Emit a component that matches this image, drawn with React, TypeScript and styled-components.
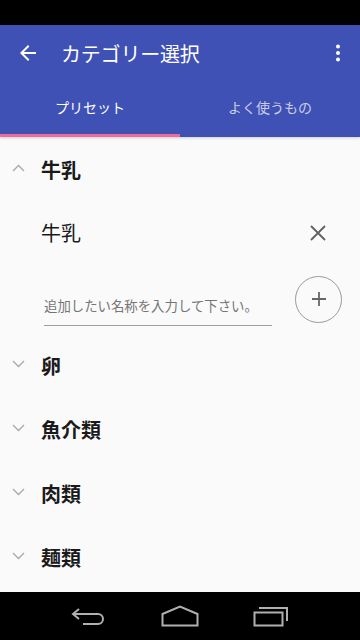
import React from "react";
import styled, { createGlobalStyle } from "styled-components";

const Global = createGlobalStyle`
  html, body { margin: 0; padding: 0; }
  body {
    width: 360px; height: 640px; overflow: hidden;
    font-family: Roboto, "Noto Sans CJK JP", sans-serif;
    background: #000;
  }
  * { box-sizing: border-box; }
`;

const Screen = styled.div`
  width: 360px; height: 640px;
  display: flex; flex-direction: column;
  background: #fafafa;
`;

const StatusBar = styled.div`
  height: 25px; background: #000; flex: none;
`;

const Header = styled.div`
  background: #3f51b5;
  flex: none;
  position: relative;
  z-index: 1;
  box-shadow: 0 1px 3px rgba(0,0,0,0.18);
`;

const AppBar = styled.div`
  height: 56px;
  display: flex; align-items: center;
  padding: 0 10px 0 16px;
`;

const IconBox = styled.div`
  width: 24px; height: 24px;
  display: flex; align-items: center; justify-content: center;
  flex: none;
`;

const Title = styled.div`
  flex: 1;
  margin-left: 21px;
  color: #fff;
  font-size: 20px;
  font-family: "Noto Sans CJK JP", sans-serif;
  letter-spacing: -0.2px;
`;

const Tabs = styled.div`
  height: 56px;
  display: flex;
  position: relative;
`;

const Tab = styled.div<{ $active?: boolean }>`
  flex: 1;
  display: flex; align-items: center; justify-content: center;
  padding-bottom: 5px;
  font-family: "Noto Sans CJK JP", sans-serif;
  font-size: 14px;
  font-weight: 400;
  color: ${(p) => (p.$active ? "#fff" : "rgba(255,255,255,0.72)")};
  position: relative;
`;

const Indicator = styled.div`
  position: absolute; left: 0; bottom: 0;
  width: 50%; height: 3px;
  background: #ec6a9c;
`;

const Content = styled.div`
  flex: 1;
  display: flex; flex-direction: column;
  overflow: hidden;
`;

const GroupRow = styled.div`
  height: 64px; flex: none;
  display: flex; align-items: center;
  padding-left: 12px;
`;

const Chevron = styled.div`
  width: 13px; height: 12px;
  display: flex; align-items: center; justify-content: center;
  margin-top: -3px;
`;

const GroupLabel = styled.div`
  margin-left: 16px;
  font-family: "Noto Sans CJK JP", sans-serif;
  font-size: 20px;
  font-weight: 700;
  color: #1a1a1a;
`;

const ItemRow = styled.div`
  height: 64px; flex: none;
  display: flex; align-items: center;
  padding: 0 30px 0 41px;
`;

const ItemLabel = styled.div`
  flex: 1;
  margin-top: -2px;
  font-family: "Noto Sans CJK JP", sans-serif;
  font-size: 20px;
  color: #1a1a1a;
`;

const InputRow = styled.div`
  height: 68px; flex: none;
  display: flex; align-items: center;
  padding: 0 18px 0 44px;
`;

const InputWrap = styled.div`
  width: 228px;
  height: 40px;
  margin-top: 14px;
  border-bottom: 1.5px solid #9e9e9e;
  display: flex; align-items: center;
`;

const Input = styled.input`
  width: 100%;
  border: none; outline: none; background: transparent;
  padding: 0 0 2px;
  font-family: "Noto Sans CJK JP", sans-serif;
  font-size: 13.4px;
  color: #333;
  &::placeholder { color: #757575; }
`;

const AddButton = styled.button`
  margin-left: auto;
  width: 47px; height: 47px;
  border-radius: 50%;
  border: 1.5px solid #9a9a9a;
  background: transparent;
  display: flex; align-items: center; justify-content: center;
  padding: 0;
`;

const NavBar = styled.div`
  height: 48px; flex: none;
  background: #000;
  display: flex; align-items: center; justify-content: space-around;
  padding: 0 44px;
`;

const NavIcon = styled.div`
  width: 40px; height: 24px;
  display: flex; align-items: center; justify-content: center;
`;

const ChevronIcon = ({ up }: { up?: boolean }) => (
  <svg width="13" height="8" viewBox="0 0 13 8">
    <path
      d={up ? "M1 7 L6.5 1.5 L12 7" : "M1 1 L6.5 6.5 L12 1"}
      fill="none"
      stroke="#a8a8a8"
      strokeWidth="1.3"
    />
  </svg>
);

const groups = ["卵", "魚介類", "肉類", "麺類"];

export default function App() {
  return (
    <>
      <Global />
      <Screen>
        <StatusBar />
        <Header>
          <AppBar>
            <IconBox>
              <svg width="24" height="24" viewBox="0 0 24 24">
                <path d="M20 11H7.83l5.59-5.59L12 4l-8 8 8 8 1.41-1.41L7.83 13H20v-2z" fill="#fff" />
              </svg>
            </IconBox>
            <Title>カテゴリー選択</Title>
            <IconBox>
              <svg width="24" height="24" viewBox="0 0 24 24">
                <circle cx="12" cy="5.5" r="2" fill="#fff" />
                <circle cx="12" cy="12" r="2" fill="#fff" />
                <circle cx="12" cy="18.5" r="2" fill="#fff" />
              </svg>
            </IconBox>
          </AppBar>
          <Tabs>
            <Tab $active>プリセット</Tab>
            <Tab>よく使うもの</Tab>
            <Indicator />
          </Tabs>
        </Header>
        <Content>
          <GroupRow>
            <Chevron><ChevronIcon up /></Chevron>
            <GroupLabel>牛乳</GroupLabel>
          </GroupRow>
          <ItemRow>
            <ItemLabel>牛乳</ItemLabel>
            <IconBox>
              <svg width="24" height="24" viewBox="0 0 24 24">
                <path d="M5 5 L19 19 M19 5 L5 19" stroke="#616161" strokeWidth="1.8" fill="none" />
              </svg>
            </IconBox>
          </ItemRow>
          <InputRow>
            <InputWrap>
              <Input placeholder="追加したい名称を入力して下さい。" />
            </InputWrap>
            <AddButton>
              <svg width="20" height="20" viewBox="0 0 20 20">
                <path d="M10 3 V17 M3 10 H17" stroke="#666" strokeWidth="1.8" fill="none" />
              </svg>
            </AddButton>
          </InputRow>
          {groups.map((g) => (
            <GroupRow key={g}>
              <Chevron><ChevronIcon /></Chevron>
              <GroupLabel>{g}</GroupLabel>
            </GroupRow>
          ))}
        </Content>
        <NavBar>
          <NavIcon>
            <svg width="36" height="22" viewBox="0 0 36 22">
              <path d="M8 4 L2 9 L8 14 M2 9 H27 A5 5 0 0 1 27 19 H12" fill="none" stroke="#b0b0b0" strokeWidth="2" />
            </svg>
          </NavIcon>
          <NavIcon>
            <svg width="38" height="22" viewBox="0 0 38 22">
              <path d="M1.5 20.5 V9 L19 1.5 L36.5 9 V20.5 Z" fill="none" stroke="#b0b0b0" strokeWidth="2" />
            </svg>
          </NavIcon>
          <NavIcon>
            <svg width="36" height="22" viewBox="0 0 36 22">
              <path d="M1.5 7.5 H29.5 V20.5 H1.5 Z" fill="none" stroke="#b0b0b0" strokeWidth="2" />
              <path d="M6 3 H34 V16" fill="none" stroke="#b0b0b0" strokeWidth="2" />
            </svg>
          </NavIcon>
        </NavBar>
      </Screen>
    </>
  );
}
